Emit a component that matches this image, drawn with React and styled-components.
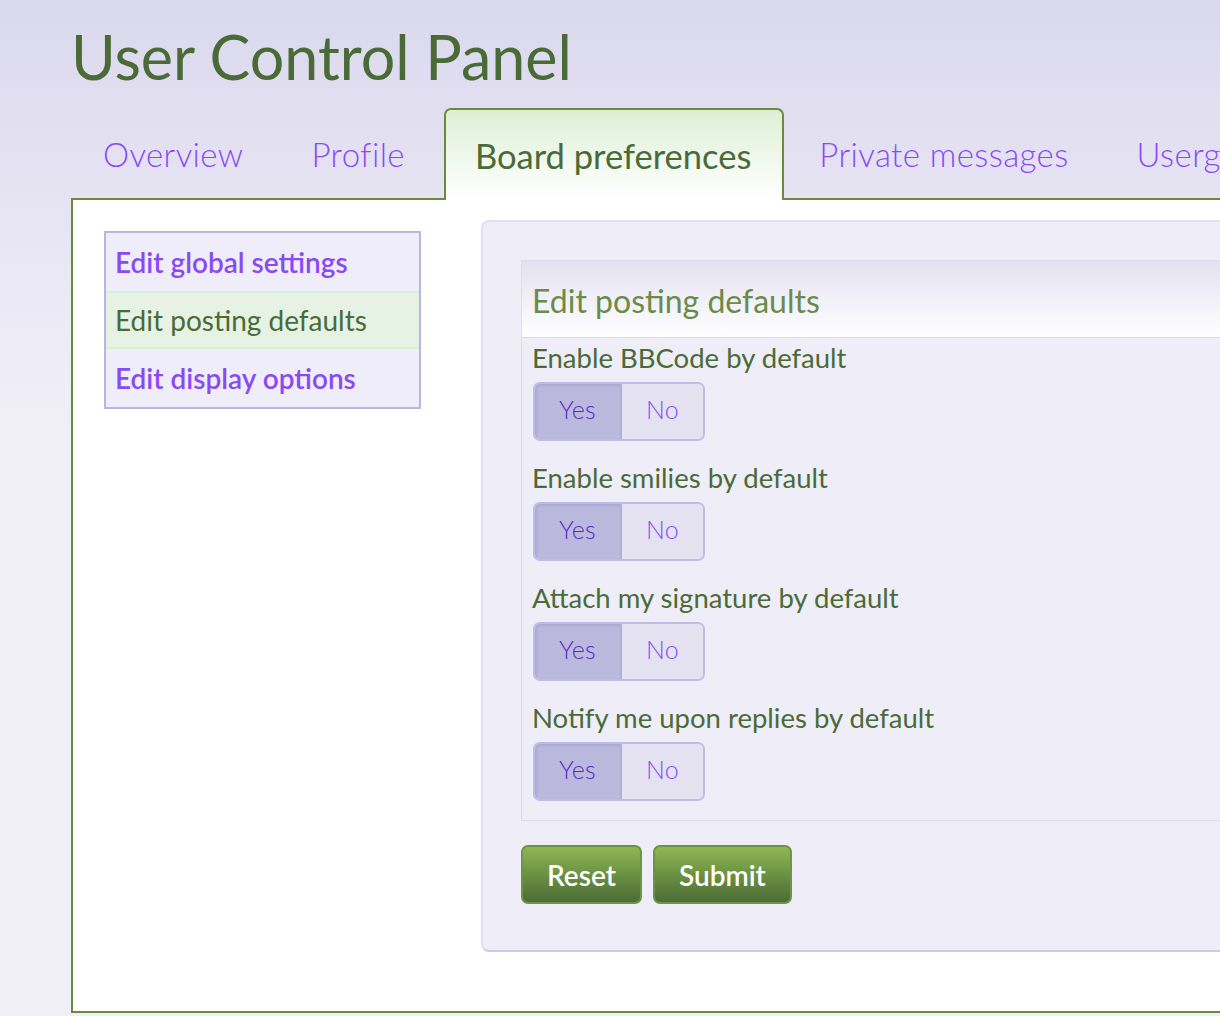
import React from 'react';
import styled, { createGlobalStyle } from 'styled-components';

const GlobalStyle = createGlobalStyle`
  html, body {
    margin: 0;
    padding: 0;
  }
  body {
    font-family: Lato, "Open Sans", sans-serif;
    background: #f0eff8;
  }
`;

const Page = styled.div`
  height: 1016px;
  overflow: hidden;
  padding: 0 0 0 71px;
  box-sizing: border-box;
  background: linear-gradient(180deg, #dad8ec 0px, #e6e4f3 200px, #f0eff8 420px);
`;

const Title = styled.h1`
  margin: 0;
  padding: 19px 0 0 0;
  height: 108px;
  box-sizing: border-box;
  font-family: Lato, "Open Sans", sans-serif;
  font-weight: 400;
  font-size: 61px;
  line-height: 76px;
  color: #4a6b38;
`;

const Tabs = styled.nav`
  display: flex;
  margin-left: -2px;
  position: relative;
  z-index: 1;
`;

const Tab = styled.a`
  display: flex;
  align-items: center;
  box-sizing: border-box;
  white-space: nowrap;
  padding: ${p => (p.active ? '0 31px 0 29px' : '0 32px')};
  margin: ${p => (p.active ? '0 1px -2px 5px' : '0')};
  font-size: ${p => (p.active ? '34.5px' : '33px')};
  font-weight: ${p => (p.active ? 400 : 300)};
  letter-spacing: ${p => (p.active ? '0' : '0.4px')};
  color: ${p => (p.active ? '#4a6b38' : '#8a4af3')};
  border: 2px solid ${p => (p.active ? '#6a8a40' : 'transparent')};
  border-bottom: none;
  border-radius: 7px 7px 0 0;
  background: ${p => (p.active ? 'linear-gradient(180deg, #dcf0d4 0%, #f2f9ef 60%, #ffffff 100%)' : 'transparent')};
  height: ${p => (p.active ? '92px' : '90px')};
  cursor: pointer;
`;

const Panel = styled.div`
  width: 1300px;
  height: 815px;
  box-sizing: border-box;
  background: #ffffff;
  border: 2px solid #6a8a40;
  display: grid;
  grid-template-columns: 317px 1fr;
  column-gap: 60px;
  align-items: start;
  padding: 31px 0 0 31px;
`;

const SideNav = styled.ul`
  list-style: none;
  margin: 0;
  padding: 0;
  border: 2px solid #bab6e0;
  background: #efedf9;
`;

const SideItem = styled.li`
  height: 58px;
  display: flex;
  align-items: center;
  padding: 0 9px;
  font-size: 28px;
  font-weight: ${p => (p.active ? 400 : 600)};
  color: ${p => (p.active ? '#4a6b38' : '#8a4af3')};
  background: ${p => (p.active ? '#e6f2e4' : 'transparent')};
  border-top: 2px solid ${p => (p.active ? '#d9efd3' : 'transparent')};
  border-bottom: 2px solid ${p => (p.active ? '#d9efd3' : 'transparent')};
  box-sizing: border-box;
`;

const Settings = styled.section`
  margin-top: -11px;
  height: 732px;
  box-sizing: border-box;
  background: #efeef8;
  border: 2px solid #e1dff1;
  border-bottom-color: #cdc9e8;
  border-right: none;
  border-radius: 8px 0 0 8px;
  padding: 38px 0 0 38px;
`;

const Fieldset = styled.div`
  border: 1px solid #dedcef;
  border-right: none;
  padding: 0 0 19px;
`;

const Legend = styled.h2`
  margin: 0;
  height: 77px;
  box-sizing: border-box;
  padding: 20px 10px 0;
  font-size: 32px;
  font-weight: 400;
  color: #6a8c48;
  background: linear-gradient(180deg, #e3e1f0 0%, #f7f6fb 70%, #ffffff 100%);
  border-bottom: 1px solid #dcdaee;
`;

const Row = styled.div`
  padding: 0 11px;
  display: flex;
  flex-direction: column;
  align-items: flex-start;
  margin-top: ${p => (p.first ? '1px' : '18px')};
`;

const Label = styled.div`
  font-size: 27.5px;
  line-height: 37px;
  color: #4a6b38;
  margin-bottom: 6px;
  margin-left: -1px;
`;

const Toggle = styled.div`
  display: flex;
  height: 59px;
  box-sizing: border-box;
  border: 2px solid #c1bde2;
  border-radius: 7px;
  overflow: hidden;
`;

const Option = styled.span`
  display: flex;
  align-items: center;
  justify-content: center;
  padding-bottom: 5px;
  box-sizing: border-box;
  width: ${p => (p.on ? '87px' : '81px')};
  font-size: 25px;
  font-weight: 300;
  letter-spacing: 0.3px;
  color: ${p => (p.on ? '#5a2fc4' : '#8a4af3')};
  background: ${p => (p.on ? '#bcb9df' : '#e4e2f1')};
  box-shadow: ${p => (p.on ? 'inset 2px 2px 3px rgba(120, 110, 180, 0.25)' : 'none')};
  border-right: ${p => (p.on ? '2px solid #b3afd8' : 'none')};
`;

const Actions = styled.div`
  display: flex;
  gap: 11px;
  margin-top: 24px;
`;

const Button = styled.button`
  height: 59px;
  padding: 0 24px;
  border: 2px solid #6c9445;
  border-radius: 7px;
  background: linear-gradient(180deg, #8fb755 0%, #6e9544 45%, #4c6c36 100%);
  color: #ffffff;
  font-family: Lato, sans-serif;
  font-size: 28px;
  font-weight: 600;
  cursor: pointer;
`;

const tabs = ['Overview', 'Profile', 'Board preferences', 'Private messages', 'Usergroups', 'Friends & Foes'];
const navItems = ['Edit global settings', 'Edit posting defaults', 'Edit display options'];
const options = [
  'Enable BBCode by default',
  'Enable smilies by default',
  'Attach my signature by default',
  'Notify me upon replies by default',
];

export default function App() {
  return (
    <Page>
      <GlobalStyle />
      <Title>User Control Panel</Title>
      <Tabs>
        {tabs.map(t => (
          <Tab key={t} active={t === 'Board preferences'}>
            {t}
          </Tab>
        ))}
      </Tabs>
      <Panel>
        <SideNav>
          {navItems.map(item => (
            <SideItem key={item} active={item === 'Edit posting defaults'}>
              {item}
            </SideItem>
          ))}
        </SideNav>
        <Settings>
          <Fieldset>
            <Legend>Edit posting defaults</Legend>
            {options.map((o, i) => (
              <Row key={o} first={i === 0}>
                <Label>{o}</Label>
                <Toggle>
                  <Option on>Yes</Option>
                  <Option>No</Option>
                </Toggle>
              </Row>
            ))}
          </Fieldset>
          <Actions>
            <Button>Reset</Button>
            <Button>Submit</Button>
          </Actions>
        </Settings>
      </Panel>
    </Page>
  );
}
